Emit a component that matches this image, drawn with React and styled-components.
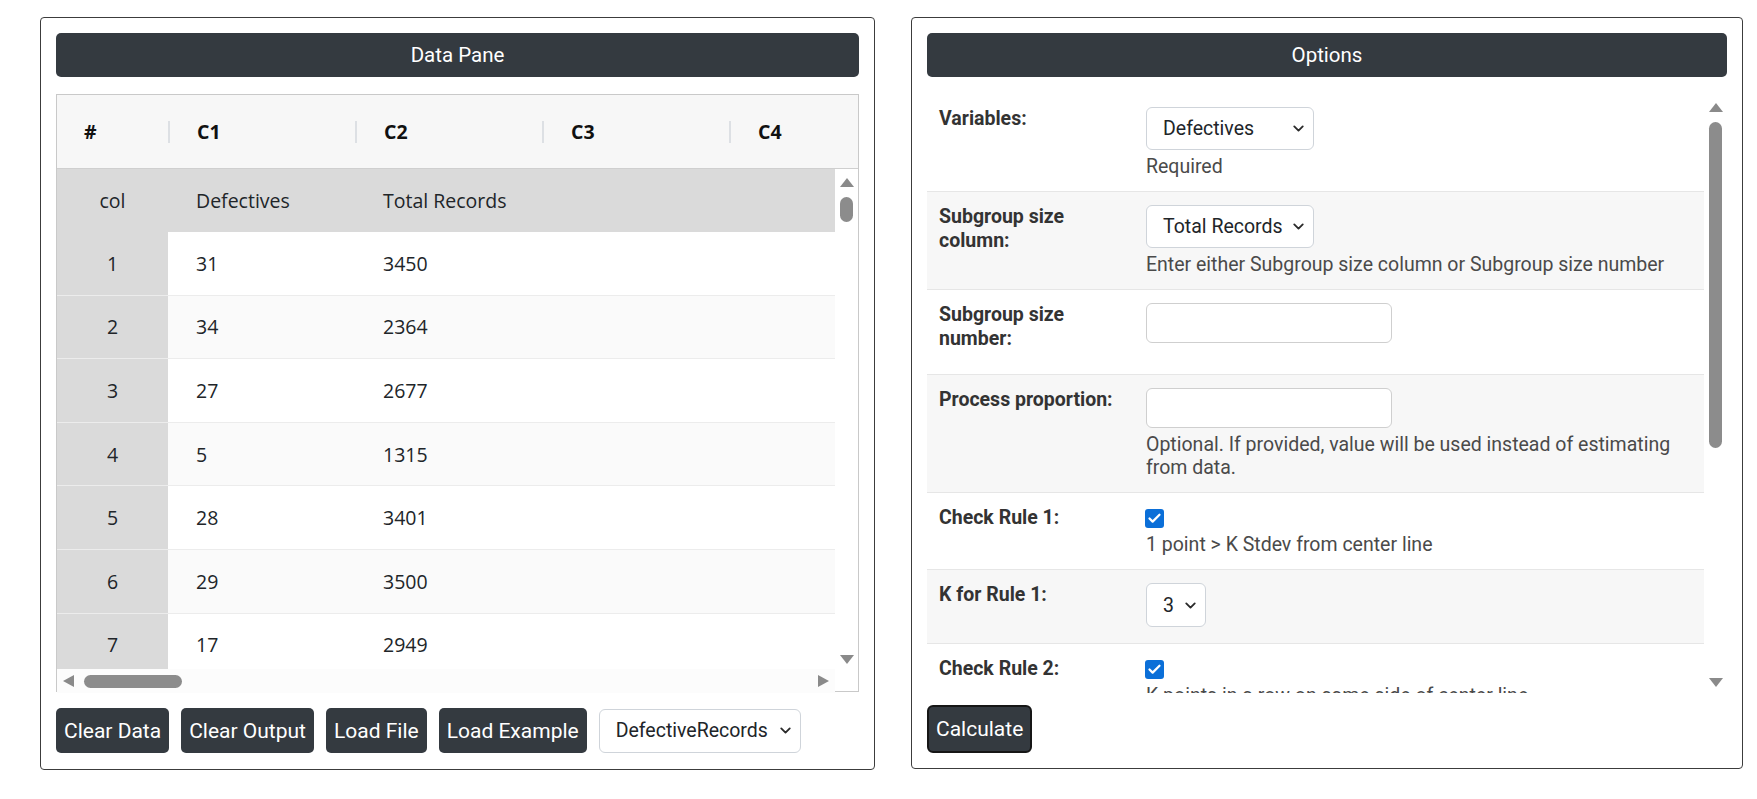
import React from 'react';
import styled, { createGlobalStyle } from 'styled-components';
import { ChevronDown, Check } from 'lucide-react';

const GlobalStyle = createGlobalStyle`
  *, *::before, *::after { box-sizing: border-box; }
  body {
    margin: 0;
    background: #fff;
    color: #212529;
    font-family: Roboto, 'Liberation Sans', sans-serif;
  }
`;

const columns = ['C1', 'C2', 'C3', 'C4'];

const records = [
  [31, 3450],
  [34, 2364],
  [27, 2677],
  [5, 1315],
  [28, 3401],
  [29, 3500],
  [17, 2949],
];

const Page = styled.div`
  display: flex;
  align-items: flex-start;
  gap: 36px;
  padding: 17px 0 0 40px;
`;

const Panel = styled.section`
  width: ${(props) => props.$w}px;
  height: ${(props) => props.$h}px;
  border: 1px solid #3c3c3c;
  border-radius: 4px;
  padding: 15px;
  display: flex;
  flex-direction: column;
`;

const TitleBar = styled.div`
  flex-shrink: 0;
  height: 44px;
  border-radius: 5px;
  background: #343a40;
  color: #fff;
  font-size: 20.5px;
  display: flex;
  align-items: center;
  justify-content: center;
`;

/* ---------- data grid ---------- */

const Grid = styled.div`
  margin-top: 17px;
  height: 598px;
  border: 1px solid #c9c9c9;
  display: flex;
  flex-direction: column;
  font-family: 'Open Sans', 'Noto Sans', sans-serif;
  font-size: 19.5px;
  color: #212529;
`;

const GridHead = styled.div`
  flex-shrink: 0;
  height: 74px;
  background: #f7f7f7;
  border-bottom: 1px solid #cfcfcf;
  display: flex;
`;

const HeadCell = styled.div`
  flex-shrink: 0;
  width: ${(props) => props.$w}px;
  padding-left: ${(props) => (props.$first ? 27 : 0)}px;
  display: flex;
  align-items: center;
  font-weight: 700;
  color: #111;
`;

const HeadDivider = styled.span`
  width: 2px;
  height: 22px;
  background: #dde0e4;
  margin-right: 27px;
`;

const GridBody = styled.div`
  height: 500px;
  display: flex;
`;

const RowsViewport = styled.div`
  flex: 1;
  min-width: 0;
  overflow: hidden;
`;

const Row = styled.div`
  display: flex;
  height: ${(props) => (props.$names ? 63 : 63.6)}px;
  background: ${(props) => (props.$names ? '#dadada' : props.$alt ? '#fafafa' : '#fff')};
  border-bottom: ${(props) => (props.$names ? 'none' : '1px solid #ececec')};
`;

const RowHead = styled.div`
  flex-shrink: 0;
  width: 111px;
  background: #dadada;
  display: flex;
  align-items: center;
  justify-content: center;
`;

const Cell = styled.div`
  flex-shrink: 0;
  width: 187px;
  padding-left: 28px;
  display: flex;
  align-items: center;
  white-space: nowrap;
`;

const Arrow = styled.span`
  flex-shrink: 0;
  width: 0;
  height: 0;
  border-style: solid;
  border-color: transparent;
  ${(props) =>
    props.$dir === 'up'
      ? 'border-width: 0 7px 9px 7px; border-bottom-color: #8a8a8a;'
      : props.$dir === 'down'
      ? 'border-width: 9px 7px 0 7px; border-top-color: #8a8a8a;'
      : props.$dir === 'left'
      ? 'border-width: 6.5px 11px 6.5px 0; border-right-color: #8a8a8a;'
      : 'border-width: 6.5px 0 6.5px 11px; border-left-color: #8a8a8a;'}
`;

const VScroll = styled.div`
  flex-shrink: 0;
  width: 23px;
  display: flex;
  flex-direction: column;
  align-items: center;
  padding: 9px 0 ${(props) => props.$bottom}px;
`;

const VThumb = styled.div`
  width: 13px;
  height: ${(props) => props.$size}px;
  margin-top: ${(props) => props.$gap}px;
  border-radius: 7px;
  background: #8c8c8c;
`;

const Spacer = styled.div`
  flex: 1;
`;

const HScrollRow = styled.div`
  flex-shrink: 0;
  height: 24px;
  display: flex;
`;

const HScroll = styled.div`
  flex: 1;
  display: flex;
  align-items: center;
  padding: 0 6px;
  background: #fcfcfc;
`;

const HThumb = styled.div`
  width: 98px;
  height: 13px;
  margin-left: 10px;
  border-radius: 7px;
  background: #8c8c8c;
`;

const Corner = styled.div`
  width: 23px;
`;

/* ---------- controls ---------- */

const Toolbar = styled.div`
  margin-top: ${(props) => props.$top || 16}px;
  display: flex;
  align-items: center;
  gap: 12px;
`;

const DarkButton = styled.button`
  height: ${(props) => (props.$outlined ? 48 : 45)}px;
  padding: 0 ${(props) => (props.$outlined ? 7 : 8)}px;
  border: ${(props) => (props.$outlined ? '2px solid #161616' : 'none')};
  border-radius: ${(props) => (props.$outlined ? 6 : 5)}px;
  background: #343a40;
  color: #fff;
  font-family: Roboto, 'Liberation Sans', sans-serif;
  font-size: 21px;
  cursor: pointer;
`;

const SelectBox = styled.div`
  width: ${(props) => props.$w}px;
  height: ${(props) => props.$h}px;
  padding: 0 6px 0 16px;
  border: 1px solid #cfd4da;
  border-radius: 6px;
  background: #fff;
  display: flex;
  align-items: center;
  justify-content: space-between;
  font-size: 19.5px;
  color: #212529;
  white-space: nowrap;
`;

const TextInput = styled.input`
  width: 246px;
  height: 40px;
  border: 1px solid #cfcfcf;
  border-radius: 6px;
  background: #fff;
  font-family: inherit;
  font-size: 19px;
  padding: 0 10px;
`;

const CheckMark = styled.span`
  width: 19px;
  height: 19px;
  margin-top: 3px;
  margin-left: -1px;
  border-radius: 3px;
  background: #0b6fd8;
  display: flex;
  align-items: center;
  justify-content: center;
`;

/* ---------- options form ---------- */

const OptionsFrame = styled.div`
  margin-top: 17px;
  height: 599px;
  display: flex;
`;

const OptionList = styled.div`
  flex: 1;
  min-width: 0;
  overflow: hidden;
`;

const OptionRow = styled.div`
  display: flex;
  padding: 13px 12px ${(props) => props.$pb || 13}px;
  background: ${(props) => (props.$alt ? '#f7f7f7' : '#fff')};
  border-bottom: 1px solid #e6e6e6;
`;

const OptionLabel = styled.div`
  flex-shrink: 0;
  width: 185px;
  margin: 0 22px 10px 0;
  font-size: 19.5px;
  font-weight: 700;
  line-height: 24px;
  color: #333;
`;

const OptionValue = styled.div`
  flex: 1;
  display: flex;
  flex-direction: column;
  align-items: flex-start;
`;

const HelpText = styled.div`
  margin-top: 5px;
  font-size: 19.5px;
  line-height: 23px;
  color: #4a4a4a;
`;

const Select = ({ value, w, h = 43 }) => (
  <SelectBox $w={w} $h={h}>
    <span>{value}</span>
    <ChevronDown size={17} strokeWidth={2.6} color="#2a2a2a" />
  </SelectBox>
);

const Checked = () => (
  <CheckMark>
    <Check size={15} strokeWidth={3.6} color="#fff" />
  </CheckMark>
);

const DataPane = () => (
  <Panel $w={835} $h={753}>
    <TitleBar>Data Pane</TitleBar>
    <Grid>
      <GridHead>
        <HeadCell $w={111} $first>#</HeadCell>
        {columns.map((c) => (
          <HeadCell key={c} $w={187}>
            <HeadDivider />
            {c}
          </HeadCell>
        ))}
      </GridHead>
      <GridBody>
        <RowsViewport>
          <Row $names>
            <RowHead>col</RowHead>
            <Cell>Defectives</Cell>
            <Cell>Total Records</Cell>
            <Cell />
            <Cell />
          </Row>
          {records.map(([defects, total], i) => (
            <Row key={i} $alt={i % 2 === 1}>
              <RowHead>{i + 1}</RowHead>
              <Cell>{defects}</Cell>
              <Cell>{total}</Cell>
              <Cell />
              <Cell />
            </Row>
          ))}
        </RowsViewport>
        <VScroll $bottom={5}>
          <Arrow $dir="up" />
          <VThumb $size={25} $gap={10} />
          <Spacer />
          <Arrow $dir="down" />
        </VScroll>
      </GridBody>
      <HScrollRow>
        <HScroll>
          <Arrow $dir="left" />
          <HThumb />
          <Spacer />
          <Arrow $dir="right" />
        </HScroll>
        <Corner />
      </HScrollRow>
    </Grid>
    <Toolbar>
      <DarkButton>Clear Data</DarkButton>
      <DarkButton>Clear Output</DarkButton>
      <DarkButton>Load File</DarkButton>
      <DarkButton>Load Example</DarkButton>
      <Select value="DefectiveRecords" w={202} h={44} />
    </Toolbar>
  </Panel>
);

const OptionsPane = () => (
  <Panel $w={832} $h={752}>
    <TitleBar>Options</TitleBar>
    <OptionsFrame>
      <OptionList>
        <OptionRow>
          <OptionLabel>Variables:</OptionLabel>
          <OptionValue>
            <Select value="Defectives" w={168} />
            <HelpText>Required</HelpText>
          </OptionValue>
        </OptionRow>
        <OptionRow $alt>
          <OptionLabel>Subgroup size column:</OptionLabel>
          <OptionValue>
            <Select value="Total Records" w={168} />
            <HelpText>Enter either Subgroup size column or Subgroup size number</HelpText>
          </OptionValue>
        </OptionRow>
        <OptionRow>
          <OptionLabel>Subgroup size number:</OptionLabel>
          <OptionValue>
            <TextInput type="text" />
          </OptionValue>
        </OptionRow>
        <OptionRow $alt>
          <OptionLabel>Process proportion:</OptionLabel>
          <OptionValue>
            <TextInput type="text" />
            <HelpText>
              Optional. If provided, value will be used instead of estimating from data.
            </HelpText>
          </OptionValue>
        </OptionRow>
        <OptionRow>
          <OptionLabel>Check Rule 1:</OptionLabel>
          <OptionValue>
            <Checked />
            <HelpText>1 point &gt; K Stdev from center line</HelpText>
          </OptionValue>
        </OptionRow>
        <OptionRow $alt $pb={16}>
          <OptionLabel>K for Rule 1:</OptionLabel>
          <OptionValue>
            <Select value="3" w={60} h={44} />
          </OptionValue>
        </OptionRow>
        <OptionRow>
          <OptionLabel>Check Rule 2:</OptionLabel>
          <OptionValue>
            <Checked />
            <HelpText>K points in a row on same side of center line</HelpText>
          </OptionValue>
        </OptionRow>
      </OptionList>
      <VScroll $bottom={6}>
        <Arrow $dir="up" />
        <VThumb $size={326} $gap={10} />
        <Spacer />
        <Arrow $dir="down" />
      </VScroll>
    </OptionsFrame>
    <Toolbar $top={12}>
      <DarkButton $outlined>Calculate</DarkButton>
    </Toolbar>
  </Panel>
);

const App = () => (
  <>
    <GlobalStyle />
    <Page>
      <DataPane />
      <OptionsPane />
    </Page>
  </>
);

export default App;
